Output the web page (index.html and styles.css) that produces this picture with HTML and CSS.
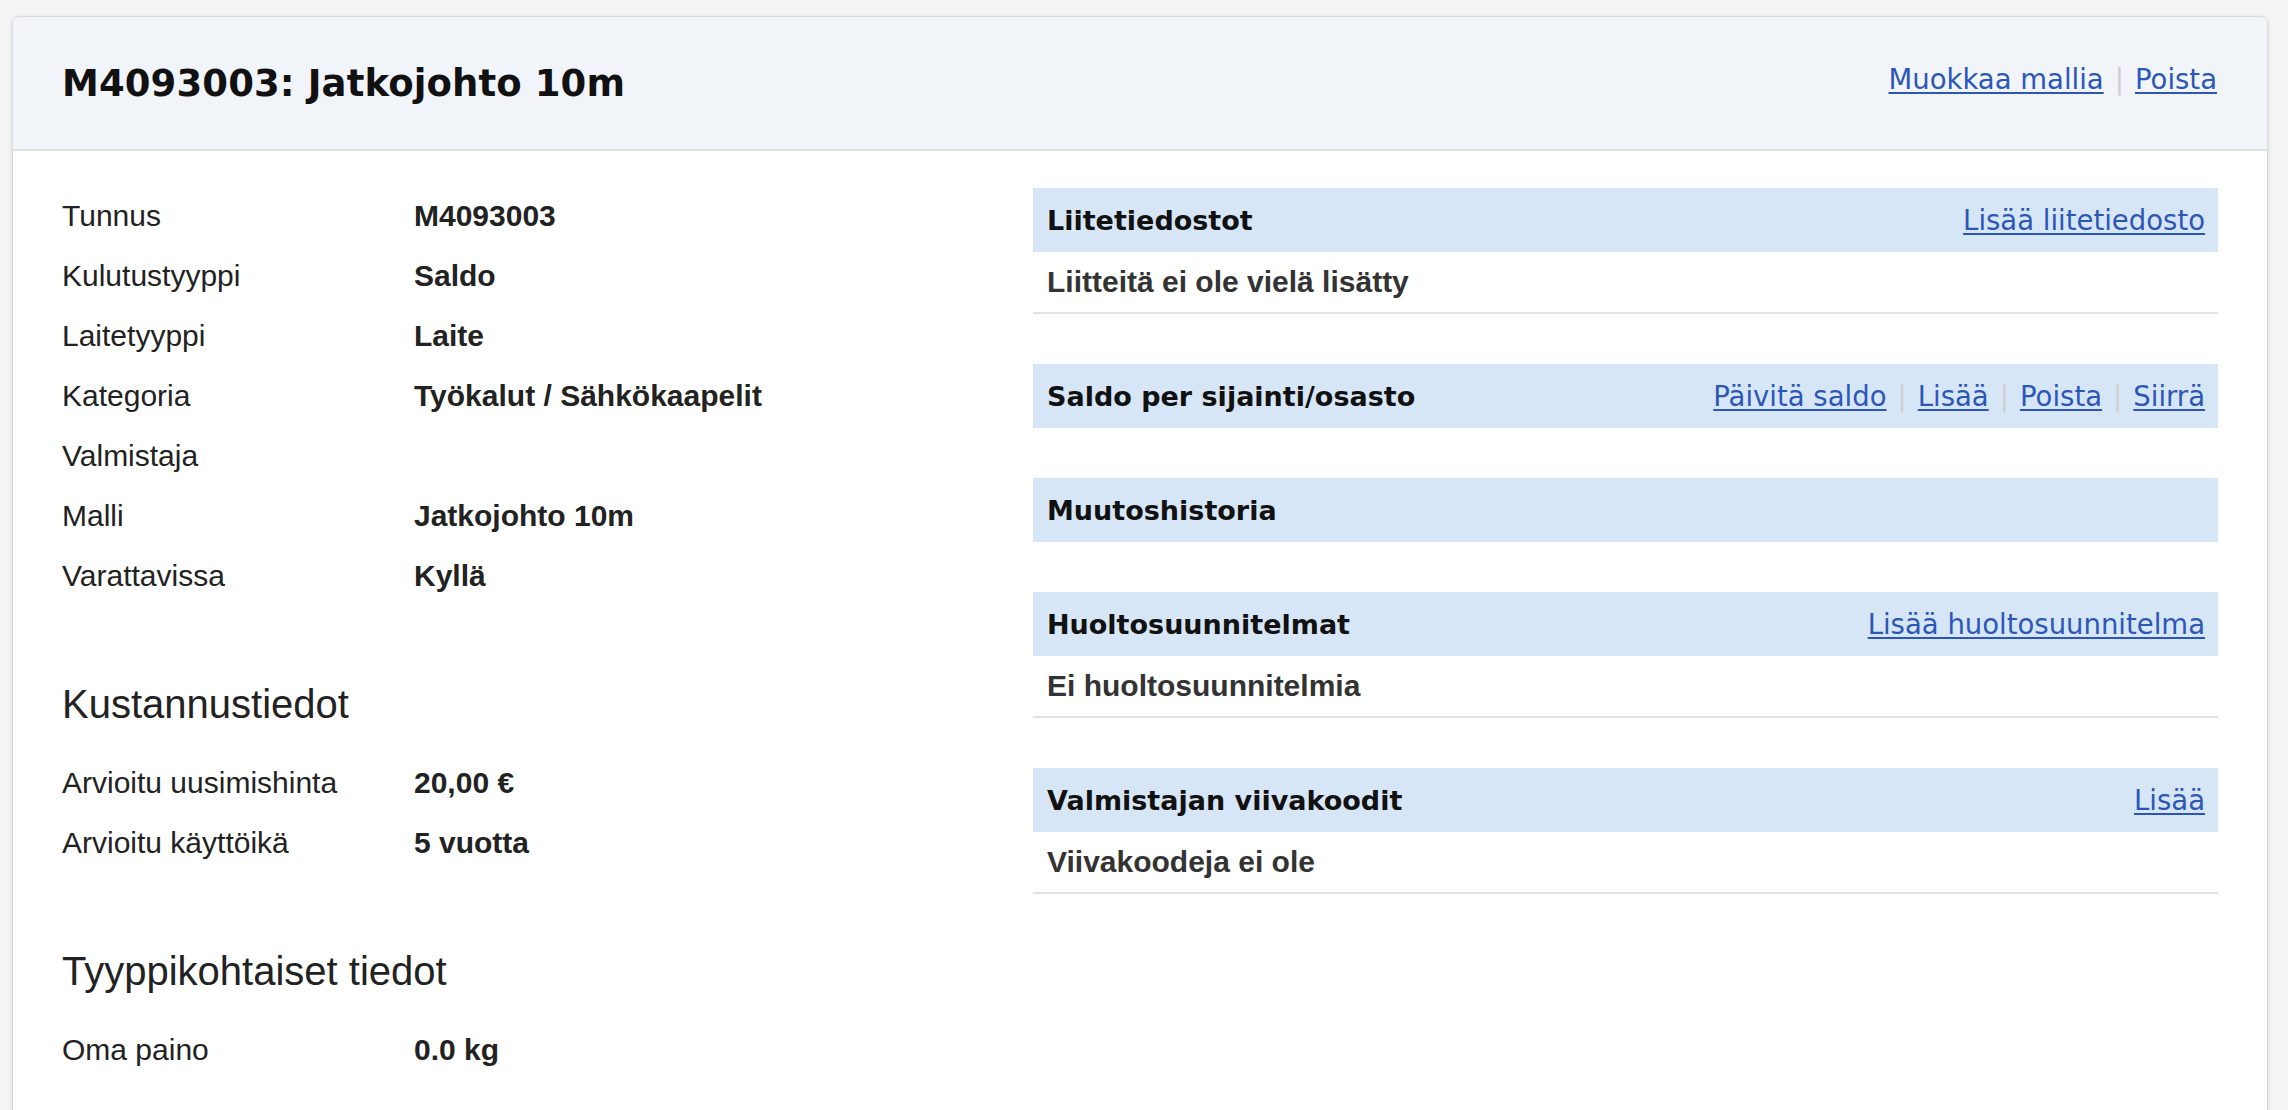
FILE: index.html
```html
<!DOCTYPE html>
<html lang="fi">
<head>
<meta charset="utf-8">
<title>M4093003: Jatkojohto 10m</title>
<link rel="stylesheet" href="styles.css">
</head>
<body>
<div class="page">
  <div class="card">
    <div class="card-header">
      <h1 class="title">M4093003: Jatkojohto 10m</h1>
      <div class="actions header-actions">
        <a href="#">Muokkaa mallia</a><span class="sep">|</span><a href="#">Poista</a>
      </div>
    </div>
    <div class="card-body">
      <div class="left">
        <div class="props">
          <div class="row"><span class="label">Tunnus</span><span class="value">M4093003</span></div>
          <div class="row"><span class="label">Kulutustyyppi</span><span class="value">Saldo</span></div>
          <div class="row"><span class="label">Laitetyyppi</span><span class="value">Laite</span></div>
          <div class="row"><span class="label">Kategoria</span><span class="value">Työkalut / Sähkökaapelit</span></div>
          <div class="row"><span class="label">Valmistaja</span><span class="value"></span></div>
          <div class="row"><span class="label">Malli</span><span class="value">Jatkojohto 10m</span></div>
          <div class="row"><span class="label">Varattavissa</span><span class="value">Kyllä</span></div>
        </div>
        <h2 class="subhead">Kustannustiedot</h2>
        <div class="props">
          <div class="row"><span class="label">Arvioitu uusimishinta</span><span class="value">20,00 €</span></div>
          <div class="row"><span class="label">Arvioitu käyttöikä</span><span class="value">5 vuotta</span></div>
        </div>
        <h2 class="subhead">Tyyppikohtaiset tiedot</h2>
        <div class="props">
          <div class="row"><span class="label">Oma paino</span><span class="value">0.0 kg</span></div>
        </div>
      </div>
      <div class="right">
        <section class="panel">
          <div class="panel-head">
            <h3 class="panel-title">Liitetiedostot</h3>
            <div class="actions"><a href="#">Lisää liitetiedosto</a></div>
          </div>
          <div class="panel-body">Liitteitä ei ole vielä lisätty</div>
        </section>
        <section class="panel">
          <div class="panel-head">
            <h3 class="panel-title">Saldo per sijainti/osasto</h3>
            <div class="actions"><a href="#">Päivitä saldo</a><span class="sep">|</span><a href="#">Lisää</a><span class="sep">|</span><a href="#">Poista</a><span class="sep">|</span><a href="#">Siirrä</a></div>
          </div>
        </section>
        <section class="panel">
          <div class="panel-head">
            <h3 class="panel-title">Muutoshistoria</h3>
          </div>
        </section>
        <section class="panel">
          <div class="panel-head">
            <h3 class="panel-title">Huoltosuunnitelmat</h3>
            <div class="actions"><a href="#">Lisää huoltosuunnitelma</a></div>
          </div>
          <div class="panel-body">Ei huoltosuunnitelmia</div>
        </section>
        <section class="panel">
          <div class="panel-head">
            <h3 class="panel-title">Valmistajan viivakoodit</h3>
            <div class="actions"><a href="#">Lisää</a></div>
          </div>
          <div class="panel-body">Viivakoodeja ei ole</div>
        </section>
      </div>
    </div>
  </div>
</div>
</body>
</html>
```

FILE: styles.css
```css
html, body {
  margin: 0;
  padding: 0;
  height: 100%;
  overflow: hidden;
  background: #f4f4f4;
}

body {
  font-family: "Liberation Sans", Arial, sans-serif;
  color: #222;
}

.page {
  padding: 16px 20px 0 12px;
}

.card {
  background: #fff;
  border: 1px solid #d9d9d9;
  border-radius: 8px;
  box-shadow: 0 1px 4px rgba(0, 0, 0, 0.12);
  overflow: hidden;
}

.card-header {
  display: flex;
  align-items: center;
  justify-content: space-between;
  height: 132px;
  padding: 0 50px 0 49px;
  background: #f1f4f9;
  border-bottom: 2px solid #dde1e7;
}

.title {
  margin: 0;
  font-family: "DejaVu Sans", sans-serif;
  font-weight: bold;
  font-size: 37px;
  color: #111;
  letter-spacing: 0.1px;
}

.actions {
  font-family: "DejaVu Sans", sans-serif;
  font-size: 27.5px;
  white-space: nowrap;
}

.header-actions {
  margin-bottom: 8px;
}

.actions a {
  color: #2c57b8;
  text-decoration: underline;
  text-underline-offset: 3px;
}

.sep {
  color: #cfcfcf;
  margin: 0 11px;
}

.card-body {
  display: grid;
  grid-template-columns: 941px 1185px;
  column-gap: 30px;
  padding: 37px 50px 40px 49px;
}

.left {
  margin-top: -2px;
}

.props {
  display: flex;
  flex-direction: column;
}

.row {
  display: grid;
  grid-template-columns: 352px 1fr;
  align-items: center;
  height: 60px;
  font-size: 30px;
}

.label {
  color: #222;
}

.value {
  font-weight: bold;
  color: #222;
}

.subhead {
  margin: 75px 0 26px;
  font-size: 40px;
  line-height: 46px;
  font-weight: normal;
  color: #222;
}

.right {
  display: flex;
  flex-direction: column;
  gap: 50px;
}

.panel-head {
  display: flex;
  align-items: center;
  justify-content: space-between;
  height: 64px;
  padding: 0 13px 0 14px;
  background: #d6e6f7;
}

.panel-title {
  margin: 0;
  font-family: "DejaVu Sans", sans-serif;
  font-weight: bold;
  font-size: 27px;
  color: #111;
}

.panel-body {
  display: flex;
  align-items: center;
  height: 60px;
  padding: 0 14px;
  font-size: 30px;
  font-weight: bold;
  color: #333;
  border-bottom: 2px solid #e3e3e3;
}
```
